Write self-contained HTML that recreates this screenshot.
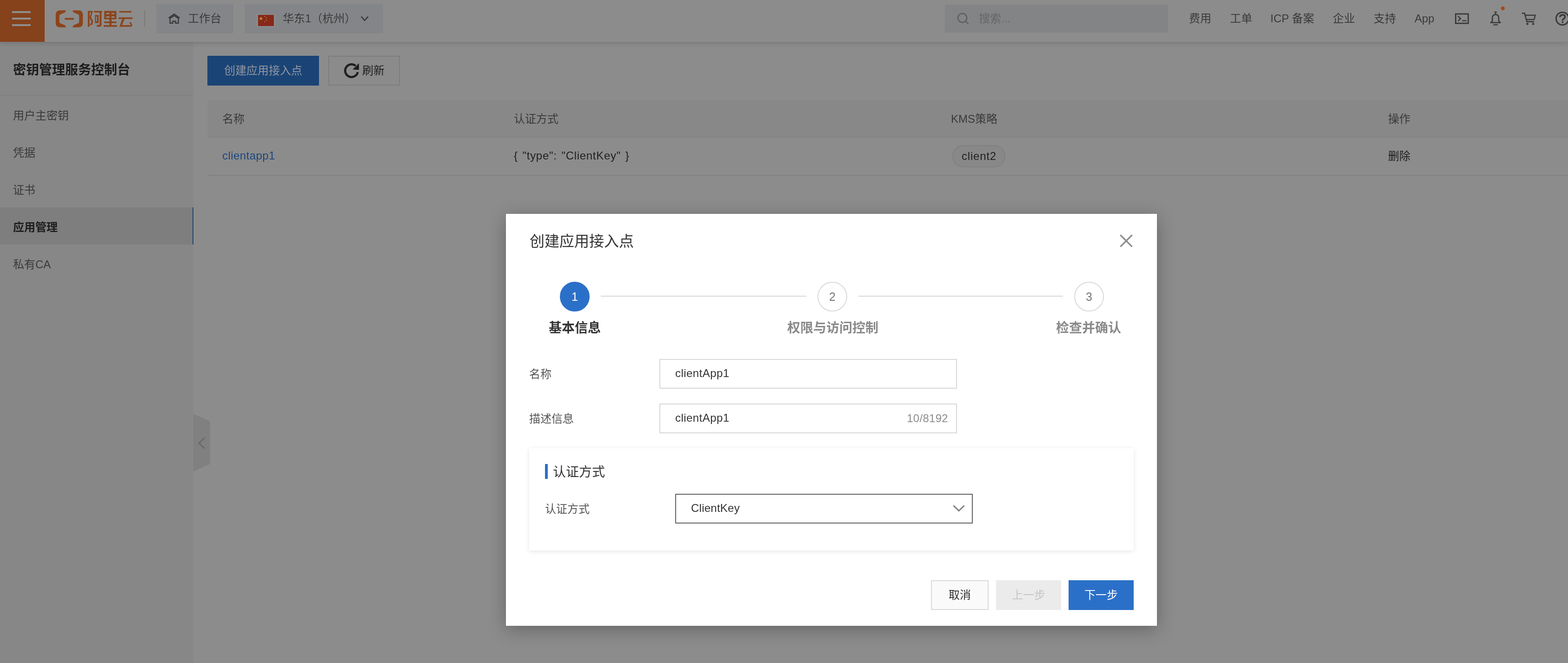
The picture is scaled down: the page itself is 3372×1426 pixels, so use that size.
<!DOCTYPE html>
<html lang="zh-CN">
<head>
<meta charset="utf-8">
<title>密钥管理服务控制台</title>
<style>
*{box-sizing:border-box;margin:0;padding:0}
html,body{width:3372px;height:1426px;overflow:hidden;background:#8c8c8c}
body{font-family:"Liberation Sans","Noto Sans CJK SC",sans-serif;font-size:24px;color:#1f1f1f;position:relative}
#root{position:absolute;left:0;top:0;width:3372px;height:1426px;will-change:transform}
.abs{position:absolute}
.t{position:absolute;white-space:nowrap;line-height:32px;height:32px}
/* header */
#hdr{position:absolute;left:0;top:0;width:3372px;height:90px;background:#8c8c8c;box-shadow:0 2px 10px rgba(0,0,0,.16);z-index:5}
#burger{position:absolute;left:0;top:0;width:96px;height:90px;background:#85421b}
#burger i{position:absolute;left:26px;width:40px;height:4px;background:#8f8f8f}
.pill{position:absolute;top:8px;height:64px;background:#848588;border-radius:4px}
.nav{color:#3a3a3a}
/* sidebar */
#side{position:absolute;left:0;top:90px;width:416px;height:1336px;background:#878787;z-index:2}
#side .ttl{left:28px;top:43px;font-size:28px;font-weight:bold;color:#1d1d1d;line-height:36px;height:36px}
#side .hr{position:absolute;left:0;top:114px;width:416px;height:2px;background:#818181}
#side .it{left:28px;color:#393939}
#side .act{position:absolute;left:0;top:356px;width:416px;height:80px;background:#7e7e7e;border-right:2px solid #1c477c}
/* main */
#main{position:absolute;left:416px;top:90px;width:2956px;height:1336px;background:#8c8c8c;z-index:1}

/* main content */
.btnp{position:absolute;left:446px;top:120px;width:240px;height:64px;background:#1b4476;color:#9296a0;text-align:center;line-height:64px;z-index:3}
.btnr{position:absolute;left:706px;top:120px;width:154px;height:64px;border:2px solid #7d7d7d;background:#8b8b8b;z-index:3}
#tbl{position:absolute;left:446px;top:218px;width:2926px;height:160px;z-index:3}
#tbl .th{position:absolute;left:0;top:-2px;width:2926px;height:79px;background:#888888}
#tbl .ln{position:absolute;left:0;width:2926px;height:2px;background:#828282}
#tbl .h{color:#3a3a3a}
#tbl .c{color:#202020}
.tag{position:absolute;left:1602px;top:94px;width:114px;height:48px;border:2px solid #808080;border-radius:24px;background:#888888}
#collapse{position:absolute;left:416px;top:890px;width:36px;height:124px;z-index:3}

/* modal */
#dlg{position:absolute;left:1088px;top:460px;width:1400px;height:886px;background:#fff;z-index:10;box-shadow:0 8px 36px rgba(0,0,0,.28);color:#333}
#dlg .title{left:51px;top:37px;font-size:32px;line-height:44px;height:44px;color:#333}
.stp{position:absolute;top:146px;width:64px;height:64px;border-radius:50%;border:2px solid #dadada;text-align:center;line-height:60px;font-size:25px;color:#777;background:#fff}
.stp.on{background:#2b70c8;border-color:#2b70c8;color:#fff}
.sln{position:absolute;top:176px;height:2px;background:#d9d9d9}
.slb{position:absolute;top:228px;width:300px;text-align:center;font-size:28px;font-weight:bold;line-height:36px;height:36px;color:#8a8a8a;white-space:nowrap}
.lbl{color:#555}
.inp{position:absolute;left:330px;width:640px;height:64px;border:2px solid #d8d8d8;background:#fff}
#card{position:absolute;left:50px;top:504px;width:1300px;height:220px;background:#fff;box-shadow:0 2px 10px rgba(0,0,0,.10)}
.sel{position:absolute;left:314px;top:98px;width:640px;height:64px;border:2px solid #626262;background:#fff}
.fb{position:absolute;top:788px;height:64px;text-align:center;line-height:64px;font-size:24px}
.cj{white-space:nowrap}
</style>
</head>
<body>
<div id="root">

<!-- ================= HEADER ================= -->
<div id="hdr">
  <div id="burger"><i style="top:24px"></i><i style="top:38px"></i><i style="top:52px"></i></div>

  <!-- logo -->
  <svg class="abs" style="left:116px;top:18px" width="176" height="46" viewBox="116 18 176 46">
    <g fill="#8c441a">
      <path d="M142.2 22.2H129.5Q119.8 22.2 119.8 31.5V49.5Q119.8 58.8 129.5 58.8H142.2L139.8 54.2L130.2 50.2Q127.8 49.2 127.8 46.8V34.2Q127.8 31.8 130.2 30.8L139.8 26.8Z"/>
      <path d="M155.8 22.2H168.5Q178.2 22.2 178.2 31.5V49.5Q178.2 58.8 168.5 58.8H155.8L158.2 54.2L167.8 50.2Q170.2 49.2 170.2 46.8V34.2Q170.2 31.8 167.8 30.8L158.2 26.8Z"/>
      <rect x="139.3" y="38.5" width="19.4" height="4"/>
      <!-- 阿 -->
      <rect x="188.8" y="23.6" width="3.8" height="34"/>
      <path d="M192 23.6H199.8L195.8 37L200.2 44.8L198.8 53L193.6 54.4V51L195.8 50.2L196.4 45.6L192.4 38L196 26.9H192Z"/>
      <rect x="201.9" y="23.6" width="17.7" height="3.4"/>
      <path d="M214.2 26.5H218.2V53Q218.2 57.6 213.8 57.6H208.2V53.6H212.8Q214.2 53.6 214.2 52.2Z"/>
      <path d="M204.2 32.2H212.1V49.7H204.2ZM206.5 35.5V46.2H208.6V35.5Z" fill-rule="evenodd"/>
      <!-- 里 -->
      <path d="M224.2 23.6H250.3V41.5H224.2ZM228.2 27.8V30.6H235.4V27.8ZM239.8 27.8V30.6H246.1V27.8ZM228.2 35V38.3H235.4V35ZM239.8 35V38.3H246.1V35Z" fill-rule="evenodd"/>
      <rect x="235.4" y="40" width="4.4" height="15"/>
      <rect x="224.2" y="46.2" width="26.1" height="3.5"/>
      <rect x="223.1" y="53.9" width="28.6" height="3.7"/>
      <!-- 云 -->
      <rect x="256.4" y="23.8" width="26.3" height="3.2"/>
      <rect x="255" y="37.4" width="29.8" height="3.5"/>
      <path d="M263 40.5H268L262.4 53.9H281.6L278 48.6L280.8 47L284.6 53.2L283.2 57.6H256.8Z"/>
    </g>
  </svg>
  <div class="abs" style="left:310px;top:22px;width:2px;height:36px;background:#7b7b7b"></div>

  <!-- workbench pill -->
  <div class="pill" style="left:336px;width:166px"></div>
  <svg class="abs" style="left:360px;top:27px" width="30" height="26" viewBox="360 27 30 26">
    <path d="M362.6 38.8L374.5 30.4L386.4 38.8" fill="none" stroke="#3a3a3a" stroke-width="2.6"/>
    <path d="M365.6 39.6V49.8H371.6V45.8H377.6V49.8H383.6V39.6L374.6 33.4Z" fill="none" stroke="#3a3a3a" stroke-width="2.4" stroke-linejoin="miter"/>
  </svg>
  <div class="t nav" style="left:404px;top:24px"><span class="cj">工作台</span></div>

  <!-- region pill -->
  <div class="pill" style="left:526px;width:298px"></div>
  <div class="abs" style="left:552px;top:30px;width:40px;height:28px;background:#8b8c8e"></div>
  <svg class="abs" style="left:555px;top:32px" width="34" height="24" viewBox="0 0 34 24">
    <rect width="34" height="24" fill="#86281a"/>
    <g fill="#c19a45">
      <path d="M6.2 3.6l1 3.1h3.2l-2.6 1.9 1 3.1-2.6-1.9-2.6 1.9 1-3.1-2.6-1.9h3.2z"/>
      <circle cx="14.6" cy="3.2" r="1"/><circle cx="18" cy="6.4" r="1"/><circle cx="18" cy="11.2" r="1"/><circle cx="14.6" cy="14.8" r="1"/>
    </g>
  </svg>
  <div class="t nav" style="left:608px;top:24px"><span class="cj">华东</span>1<span class="cj">（杭州）</span></div>
  <svg class="abs" style="left:774px;top:33px" width="20" height="14" viewBox="774 33 20 14">
    <path d="M776.8 35.6L784.2 43.8L791.6 35.6" fill="none" stroke="#3a3a3a" stroke-width="2.6"/>
  </svg>

  <!-- search -->
  <div class="abs" style="left:2032px;top:10px;width:480px;height:60px;background:#838486"></div>
  <svg class="abs" style="left:2056px;top:24px" width="30" height="30" viewBox="2056 24 30 30">
    <circle cx="2069.6" cy="38.6" r="9.6" fill="none" stroke="#5e5e5e" stroke-width="2.4"/>
    <path d="M2076.4 45.6L2082.6 51.6" stroke="#5e5e5e" stroke-width="2.4" fill="none"/>
  </svg>
  <div class="t" style="left:2105px;top:24px;color:#666"><span class="cj">搜索</span>...</div>

  <!-- nav links -->
  <div class="t nav" style="left:2557px;top:24px"><span class="cj">费用</span></div>
  <div class="t nav" style="left:2645px;top:24px"><span class="cj">工单</span></div>
  <div class="t nav" style="left:2732px;top:24px">ICP <span class="cj">备案</span></div>
  <div class="t nav" style="left:2866px;top:24px"><span class="cj">企业</span></div>
  <div class="t nav" style="left:2954px;top:24px"><span class="cj">支持</span></div>
  <div class="t nav" style="left:3042px;top:24px">App</div>

  <!-- icons: terminal, bell, cart, help -->
  <svg class="abs" style="left:3126px;top:14px" width="246" height="46" viewBox="3126 14 246 46">
    <g fill="none" stroke="#3a3a3a" stroke-width="2.8">
      <rect x="3130.4" y="30" width="27" height="20.2"/>
      <path d="M3135.4 34.6L3141 40L3135.4 45.4" stroke-width="2.6"/>
      <path d="M3144.4 44.6H3153.6" stroke-width="2.4"/>
      <!-- bell -->
      <path d="M3206 48.8L3209.4 44.8V38.6Q3209.4 31.3 3216.2 31.3Q3223 31.3 3223 38.6V44.8L3226.4 48.8Z" stroke-width="2.6" stroke-linejoin="round"/>
      <path d="M3213.2 26H3219" stroke-width="2.2"/>
      <path d="M3216.2 26.6V30.6" stroke-width="2.4"/>
      <path d="M3211.2 53.4H3221" stroke-width="2.4"/>
      <!-- cart -->
      <path d="M3273 28.6H3278.6L3283.6 46.6H3299.2" stroke-width="2.6"/>
      <path d="M3280.2 32.8H3301.4L3299.2 42H3282.6" stroke-width="2.6"/>
      <!-- help -->
      <circle cx="3360" cy="40" r="13.6" stroke-width="3"/>
      <path d="M3354.8 37Q3354.8 32 3360.2 32Q3365.6 32 3365.6 36.2Q3365.6 38.8 3362.6 40.4Q3360.4 41.6 3360.4 44.4" stroke-width="3.4"/>
    </g>
    <g fill="#3a3a3a">
      <rect x="3358.6" y="45.8" width="3.6" height="3.6"/><circle cx="3284.6" cy="51.4" r="2.4"/><circle cx="3297" cy="51.4" r="2.4"/>
    </g>
    <circle cx="3231.8" cy="17.9" r="4" fill="#a84819"/>
  </svg>
</div>

<!-- ================= SIDEBAR ================= -->
<div id="side">
  <div class="t ttl"><span class="cj">密钥管理服务控制台</span></div>
  <div class="hr"></div>
  <div class="t it" style="top:143px"><span class="cj">用户主密钥</span></div>
  <div class="t it" style="top:223px"><span class="cj">凭据</span></div>
  <div class="t it" style="top:303px"><span class="cj">证书</span></div>
  <div class="act"></div>
  <div class="t it" style="top:383px;font-weight:bold;color:#1d1d1d"><span class="cj">应用管理</span></div>
  <div class="t it" style="top:463px"><span class="cj">私有</span>CA</div>
</div>

<div id="main"></div>

<!-- ================= MAIN CONTENT ================= -->
<div class="btnp"><span class="cj">创建应用接入点</span></div>
<div class="btnr">
  <svg class="abs" style="left:32px;top:14px" width="32" height="32" viewBox="0 0 32 32">
    <path d="M29.4 18.9A13.7 13.7 0 1 1 24.8 5.5" fill="none" stroke="#1e1e1e" stroke-width="4.6"/>
    <path d="M32 0V14.2L18.4 13.6Z" fill="#1e1e1e"/>
  </svg>
  <div class="t" style="left:71px;top:14px;color:#1e1e1e"><span class="cj">刷新</span></div>
</div>

<div id="tbl">
  <div class="th"></div>
  <div class="ln" style="top:76px"></div>
  <div class="ln" style="top:158px"></div>
  <div class="t h" style="left:32px;top:22px"><span class="cj">名称</span></div>
  <div class="t h" style="left:659px;top:22px"><span class="cj">认证方式</span></div>
  <div class="t h" style="left:1599px;top:22px">KMS<span class="cj">策略</span></div>
  <div class="t h" style="left:2539px;top:22px"><span class="cj">操作</span></div>
  <div class="t c" style="left:32px;top:101px;color:#1d467a;letter-spacing:.45px">clientapp1</div>
  <div class="t c" style="left:659px;top:101px;letter-spacing:.7px;word-spacing:2.5px">{ "type": "ClientKey" }</div>
  <div class="tag"></div>
  <div class="t c" style="left:1622px;top:102px;letter-spacing:.8px">client2</div>
  <div class="t c" style="left:2539px;top:102px"><span class="cj">删除</span></div>
</div>

<svg id="collapse" viewBox="0 0 36 124">
  <path d="M0 0L36 16V108L0 124Z" fill="#808080"/>
  <path d="M24 51.5L12 63L24 74.5" fill="none" stroke="#686868" stroke-width="2.6"/>
</svg>

<!-- ================= MODAL ================= -->
<div id="dlg">
  <div class="t title"><span class="cj">创建应用接入点</span></div>
  <svg class="abs" style="left:1318px;top:42px" width="32" height="32" viewBox="0 0 32 32">
    <path d="M3.4 3.4L28.6 28.6M28.6 3.4L3.4 28.6" stroke="#8a8a8a" stroke-width="3.2" fill="none"/>
  </svg>

  <!-- steps -->
  <div class="sln" style="left:204px;width:442px"></div>
  <div class="sln" style="left:758px;width:440px"></div>
  <div class="stp on" style="left:116px">1</div>
  <div class="stp" style="left:670px">2</div>
  <div class="stp" style="left:1222px">3</div>
  <div class="slb" style="left:-2px;color:#333"><span class="cj">基本信息</span></div>
  <div class="slb" style="left:553px"><span class="cj">权限与访问控制</span></div>
  <div class="slb" style="left:1103px"><span class="cj">检查并确认</span></div>

  <!-- form -->
  <div class="t lbl" style="left:50px;top:329px"><span class="cj">名称</span></div>
  <div class="inp" style="top:312px"><div class="t" style="left:32px;top:13px;color:#333;letter-spacing:.45px">clientApp1</div></div>
  <div class="t lbl" style="left:50px;top:425px"><span class="cj">描述信息</span></div>
  <div class="inp" style="top:408px"><div class="t" style="left:32px;top:13px;color:#333;letter-spacing:.45px">clientApp1</div><div class="t" style="right:17px;top:14px;color:#8c8c8c;letter-spacing:.3px">10/8192</div></div>

  <div id="card">
    <div class="abs" style="left:34px;top:34px;width:6px;height:32px;background:#2b70c8"></div>
    <div class="t" style="left:51px;top:34px;font-size:28px;line-height:36px;height:36px;color:#333"><span class="cj">认证方式</span></div>
    <div class="t lbl" style="left:34px;top:115px"><span class="cj">认证方式</span></div>
    <div class="sel">
      <div class="t" style="left:32px;top:13px;color:#333;letter-spacing:.25px">ClientKey</div>
      <svg class="abs" style="left:593px;top:19px" width="30" height="20" viewBox="0 0 30 20">
        <path d="M3.4 4.4L15 15.6L26.6 4.4" fill="none" stroke="#858585" stroke-width="3"/>
      </svg>
    </div>
  </div>

  <!-- footer -->
  <div class="fb" style="left:914px;width:124px;border:2px solid #dadada;background:#fafafa;color:#333;line-height:60px"><span class="cj">取消</span></div>
  <div class="fb" style="left:1054px;width:140px;background:#ebebeb;color:#c4c4c4"><span class="cj">上一步</span></div>
  <div class="fb" style="left:1210px;width:140px;background:#2b70c8;color:#fff"><span class="cj">下一步</span></div>
</div>

</div>
</body>
</html>
